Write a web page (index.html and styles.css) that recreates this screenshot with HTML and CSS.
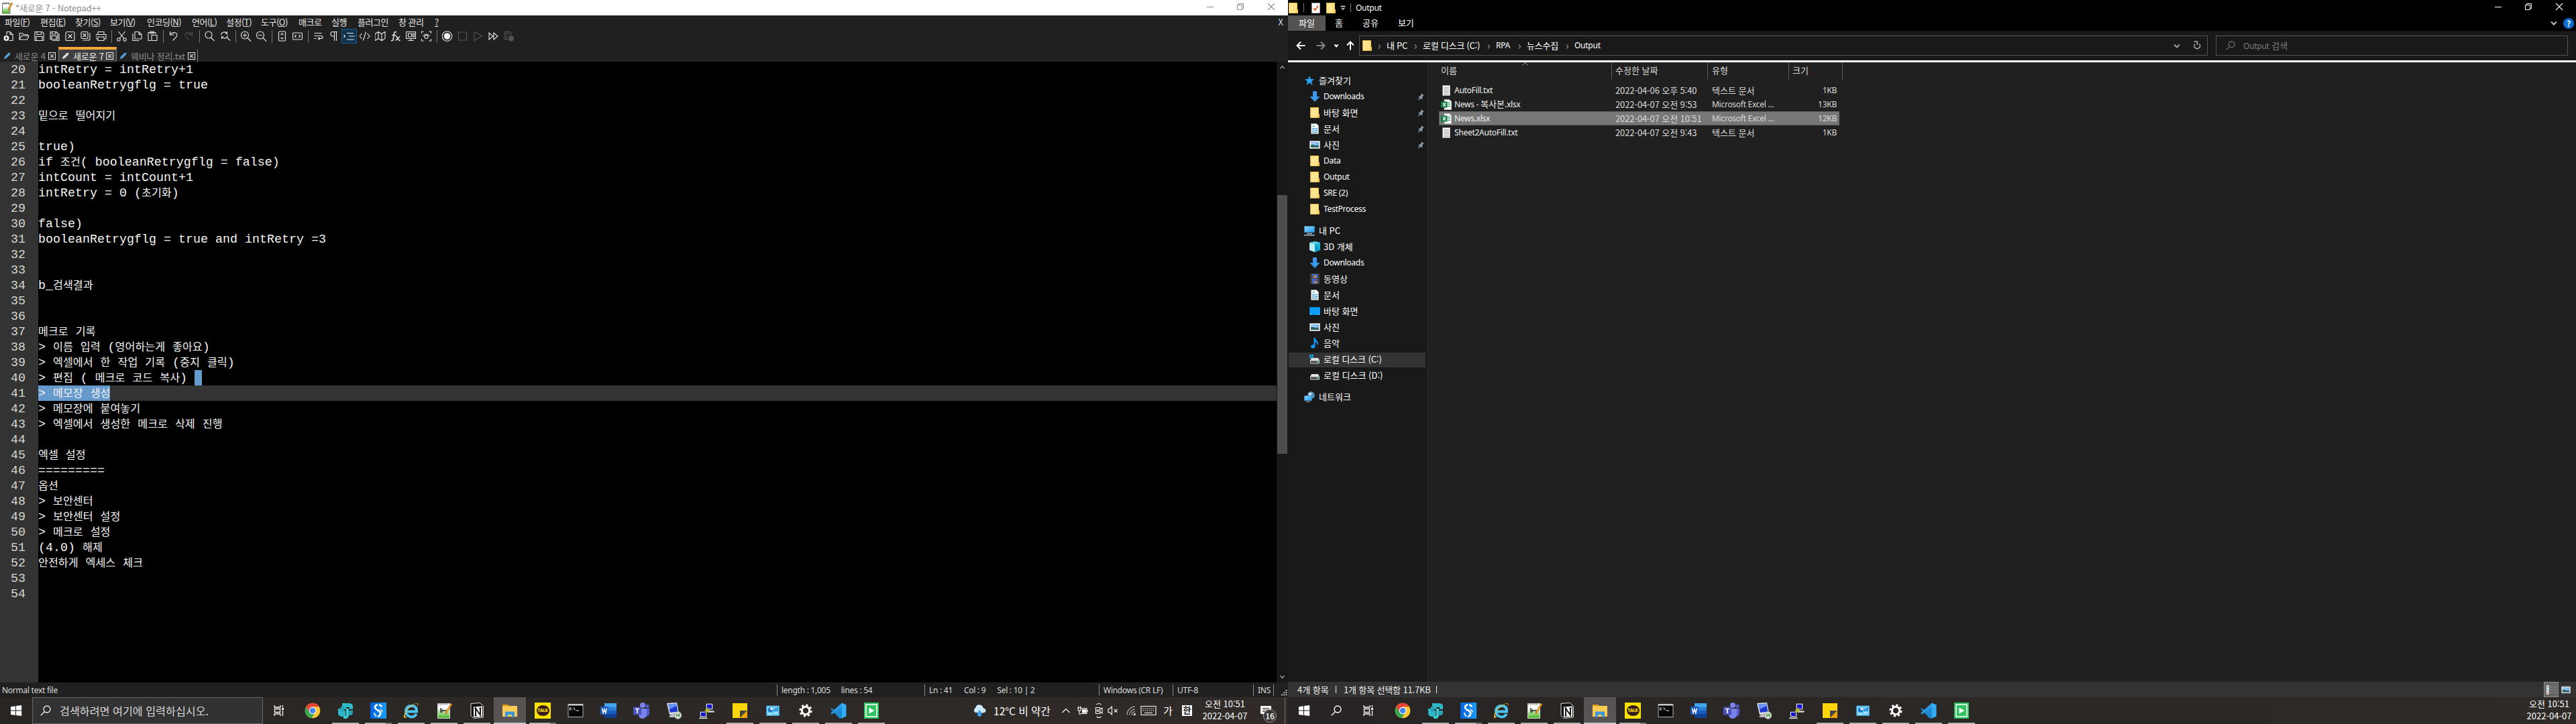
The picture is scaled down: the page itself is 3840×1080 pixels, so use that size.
FILE: index.html
```html
<!DOCTYPE html>
<html lang="ko">
<head>
<meta charset="utf-8">
<title>Desktop</title>
<link rel="stylesheet" href="styles.css">
</head>
<body>
<svg class="defs" width="0" height="0">
  <defs>
    <linearGradient id="g-blue" x1="0" y1="0" x2="1" y2="1"><stop offset="0" stop-color="#8fd8ff"/><stop offset="1" stop-color="#1e9bf0"/></linearGradient>
    <linearGradient id="g-green" x1="0" y1="0" x2="0" y2="1"><stop offset=".3" stop-color="#fff"/><stop offset="1" stop-color="#3fb51c"/></linearGradient>
    <linearGradient id="g-s" x1="0" y1="0" x2="1" y2="0"><stop offset="0" stop-color="#0062e0"/><stop offset="1" stop-color="#1e9cf5"/></linearGradient>
  </defs>
  <symbol id="pencil" viewBox="0 0 12 12"><path d="M1 11l1-3.6L8 1.4Q10-.2 11 1t-.4 3L4.4 10z"/></symbol>
  <symbol id="xbox" viewBox="0 0 12 12"><path d="M.5.5h11v11H.5zM3.2 3.2l5.6 5.6M8.8 3.2L3.2 8.8" fill="none" stroke="currentColor" stroke-width="1.2"/></symbol>
  <symbol id="folder" viewBox="0 0 14 16"><path d="M.5.5h12v9.500h1v5.500H.5z" fill="#ffe48f" stroke="#e8b93a"/><path d="M11.500 10v5" stroke="#e8b93a"/></symbol>
  <symbol id="down" viewBox="0 0 16 16"><path d="M5 0h6v8h4.600L8 16 .4 8H5z" fill="#3a98e8"/></symbol>
  <symbol id="doc" viewBox="0 0 16 16"><path d="M2.500.5h8l3 3v12h-11z" fill="#fff" stroke="#999"/><path d="M4 7.500h8M5 5l1-2 1 2M4 9.500h3M4 11.500h3M4 13.500h8" stroke="#2a93d5" fill="none"/><path d="M8 9h4v3H8z" fill="#7bb3d8"/></symbol>
  <symbol id="pic" viewBox="0 0 16 16"><path d="M.5 2.500h15v11H.5z" fill="#fff" stroke="#aaa"/><path d="M2 4h12v8H2z" fill="#75aff0"/><path d="M2 8q4-1 6 1h6v3H2z" fill="#2f655d"/><path d="M2 6h8v1H2z" fill="#dbeeff"/></symbol>
  <symbol id="star" viewBox="0 0 16 16"><path d="M8 1l2 5 5 .1-3.800 3.400L12.500 15 8 11.500 3.500 15l1.300-5.500L1 6.100 6 6z" fill="#2aa3f0"/></symbol>
  <symbol id="pc" viewBox="0 0 16 16"><path d="M.5 1.500h15v9H.5z" fill="url(#g-blue)" stroke="#3c7fae"/><path d="M4 12.500h8M0 14.800h16" stroke="#a9b9c6" stroke-width="1.400"/></symbol>
  <symbol id="cube" viewBox="0 0 16 16"><path d="M0 2l8-2 8 2v11l-8 3-8-3z" fill="#1cb3d8"/><path d="M0 2l8 2v12l-8-3z" fill="#b9edf3"/><path d="M0 2l8-2 8 2-8 2z" fill="#5fd3dd"/><path d="M8 4l8 9-8 3z" fill="#0a9bcd"/></symbol>
  <symbol id="film" viewBox="0 0 16 16"><path d="M1 0h14v16H1z" fill="#4a4a4a"/><path d="M4 1h8v6H4zM4 8h8v7H4z" fill="#3d69c8"/><path d="M7 3h3v3H7zM7 12h4v2H7z" fill="#dba13a"/><path d="M5 4h2v2H5zM8 9h3v2H8z" fill="#b0344a"/><path d="M2.500 0v16M13.500 0v16" stroke="#111" stroke-dasharray="1 1.500"/></symbol>
  <symbol id="desk" viewBox="0 0 16 16"><path d="M.5 2.500h15v11H.5z" fill="#0e9cff" stroke="#0a83d8"/><path d="M1 12.500h14" stroke="#bfe3ff" stroke-dasharray="2 9 1 1"/></symbol>
  <symbol id="note" viewBox="0 0 16 16"><path d="M6.500 0H8.500Q9 3 12 5.500 14 8.500 11.500 11.500 12.500 7.500 8.500 6v7a3.200 2.800 0 1 1-2-2.600z" fill="#0e9cff"/></symbol>
  <symbol id="disk" viewBox="0 0 16 16"><path d="M3 6h10l2 4H1z" fill="#e2e2e2"/><path d="M1.500 10h13v4h-13z" fill="#444" stroke="#ccc"/><path d="M11 11h2v2h-2z" fill="#44e060"/></symbol>
  <symbol id="diskc" viewBox="0 0 16 16"><use href="#disk"/><path d="M0 1h2.600v2.400H0zM3.400 1H6v2.400H3.400zM0 4.200h2.600v2.400H0zM3.400 4.200H6v2.400H3.400z" fill="#17b4f2"/></symbol>
  <symbol id="net" viewBox="0 0 16 16"><circle cx="10.500" cy="5.500" r="5.400" fill="#5592b8"/><circle cx="9" cy="4" r="2.400" fill="#bfdcec"/><path d="M.5 6.500h11v7H.5z" fill="url(#g-blue)" stroke="#3c7fae"/><path d="M3 15.300h6" stroke="#a9b9c6"/></symbol>
  <symbol id="pin" viewBox="0 0 12 12"><path d="M6 1l5 3-1.500.5L8 8l.5 2.500L5.500 9 1 12l3-4.500L2 6l3-.6 2-3z" fill="#8d99a5"/></symbol>
  <symbol id="txt" viewBox="0 0 14 16"><path d="M1.500.5h11v15h-11z" fill="#fff" stroke="#999"/><path d="M3 3.500h8M3 5.500h8M3 7.500h8M3 9.500h8M3 11.500h8M3 13.500h8" stroke="#a8a8a8"/></symbol>
  <symbol id="xls" viewBox="0 0 16 16"><path d="M5 .5h7.500l3 3v12H5z" fill="#f7f7f7" stroke="#bbb"/><path d="M10 5.500h4M10 8h4M10 10.500h4" stroke="#21a366"/><path d="M0 3.500h9.500v9H0z" fill="#107c41"/><path d="M3 5.500l4 5M7 5.500l-4 5" stroke="#fff" stroke-width="1.300"/></symbol>
  <symbol id="mag" viewBox="0 0 16 16"><circle cx="10" cy="6" r="5" fill="none" stroke="currentColor" stroke-width="1.300"/><path d="M6.500 9.500L.8 15.200" stroke="currentColor" stroke-width="1.300"/></symbol>

  <symbol id="t-win" viewBox="0 0 32 32"><path d="M8 10.300l7-1v6.300H8zM16 9.100l8.200-1.200v7.700H16zM8 16.500h7v6.400l-7-1zM16 16.500h8.200v7.600L16 23z" fill="#fff"/></symbol>
  <symbol id="t-view" viewBox="0 0 32 32"><path d="M9 8v3h9V8M9 24v-3h9v3M9.500 13.500h8v5h-8zM21.500 8v3M21.500 16v8" fill="none" stroke="#fff" stroke-width="1.300"/><path d="M20 12h3v3h-3z" fill="#fff"/></symbol>
  <symbol id="t-chrome" viewBox="0 0 32 32"><circle cx="16" cy="16" r="11.300" fill="#fcc934"/><path d="M6.200 10.300A11.300 11.300 0 0 1 25.800 10.300H16L11 19z" fill="#ea4335"/><path d="M6.200 10.300a11.300 11.300 0 0 0 8.500 16.900l5-8.500h-8.500z" fill="#34a853"/><circle cx="16" cy="16" r="5.400" fill="#fff"/><circle cx="16" cy="16" r="4.300" fill="#4285f4"/></symbol>
  <symbol id="t-knot" viewBox="0 0 32 32"><path d="M11 5h11q5 1 5 4v5h-5v-3h-5v3h-6zM5 13h5v3h6v9h-6q-5-1-5-5z" fill="#2fb8c8"/><path d="M17 13h4v10q0 4-4 5h-4v-4h4z" fill="#39cbd6"/><path d="M9 10h5v8H9zM20 16h7v4l-2 3h-5z" fill="#27a3b4"/></symbol>
  <symbol id="t-s" viewBox="0 0 32 32"><path d="M4 4h24v24H4z" fill="url(#g-s)"/><path d="M15 7q-5 2-4 5 1 2 5 4t3 6q-1 2-4 3M17 7.500q3 0 4 3" fill="none" stroke="#fff" stroke-width="2.600"/><path d="M10 19q0 4 3 5.500M19 14q3 2 3 4.500" fill="none" stroke="#cfe9ff" stroke-width="2"/></symbol>
  <symbol id="t-ie" viewBox="0 0 32 32"><path d="M8.500 17.500h15.500q.6-8.500-7.500-8.500t-8.500 8q.5 8 8.500 8.500 5 0 7-4.500" fill="none" stroke="#4cc3f5" stroke-width="4"/><path d="M6 27Q3 25 9 15 16 6 25 5q3 1 0 6 3-8-5-4Q9 13 7 22q-1 4 3 3-3 2.500-4 2z" fill="#f6c12c"/></symbol>
  <symbol id="t-npp" viewBox="0 0 32 32"><path d="M6.500 5.500h18v22h-18z" fill="url(#g-green)" stroke="#ddd"/><path d="M8 5v3M11 5v3M14 5v3M17 5v3M20 5v3" stroke="#777"/><path d="M11 12v7M13 14v5M14 16h6" stroke="#222" stroke-width="1.400"/><path d="M26 5l2 1.500L20 20l-2 1.500V19z" fill="#f4a62a" stroke="#a35a14" stroke-width=".6"/></symbol>
  <symbol id="t-notion" viewBox="0 0 32 32"><path d="M7 5.500l13-1 5.500 4.500v17l-14 1.500-4.500-4z" fill="#111" stroke="#ddd"/><path d="M11 10.500l13-1v15.500l-13 1z" fill="#fff"/><path d="M14 23V13l7 9.500V12.500M12.500 12.500h3M12.500 23.500h3M19.500 12.500h3" fill="none" stroke="#111" stroke-width="1.900"/></symbol>
  <symbol id="t-exp" viewBox="0 0 32 32"><path d="M5 7h8l2 2h12v16H5z" fill="#fecb55"/><path d="M5 7h8l2 2.500H5z" fill="#e39a16"/><path d="M9 17.500h14V26h-4v-4h-6v4H9z" fill="#3b95dc"/></symbol>
  <symbol id="t-cmd" viewBox="0 0 32 32"><path d="M5 6.500h22v19H5z" fill="#050505" stroke="#b5b5b5"/><path d="M5 6.500h22v2H5z" fill="#d0d0d0"/><path d="M10 12H7.500v3H10M12 12v.8M12 14.500v.8M13.500 11.500l2 4M17 16h4" fill="none" stroke="#fff"/></symbol>
  <symbol id="t-word" viewBox="0 0 32 32"><path d="M10 5h18v6H10z" fill="#41a5ee"/><path d="M10 11h18v5H10z" fill="#2b7cd3"/><path d="M10 16h18v5H10z" fill="#185abd"/><path d="M10 21h18v6H10z" fill="#103f91"/><path d="M4 10h12v12H4z" fill="#185abd"/><path d="M6.500 12.500l1.700 7L10 14l1.800 5.500 1.700-7" fill="none" stroke="#fff" stroke-width="1.500"/></symbol>
  <symbol id="t-teams" viewBox="0 0 32 32"><circle cx="18" cy="8" r="4" fill="#7b83eb"/><circle cx="25" cy="9.500" r="2.700" fill="#5059c9"/><path d="M19 13h9v8q-1 4-6 4z" fill="#5059c9"/><path d="M12 13h12v9q-1 6-7 6-5-1-5-6z" fill="#7b83eb"/><path d="M4 10.500h12v12H4z" fill="#4b53bc"/><path d="M7 13.500h6M10 13.500v6.500" stroke="#fff" stroke-width="1.700"/></symbol>
  <symbol id="t-rdp" viewBox="0 0 32 32"><path d="M5 5l15-1 3 15-14 3z" fill="#e4e6ee"/><path d="M7 6.500l12-1 2.500 12L10 19z" fill="#1b39d0"/><path d="M7 6.500l12-1 .7 3.500L9 14z" fill="#6a92f5"/><path d="M12 21l7-1 1 4q-6 4-12 1z" fill="#bcbfc7"/><circle cx="21.500" cy="23" r="5.400" fill="#dcdfd9" stroke="#969b92"/><path d="M19 21l2 2-2 2M24.500 20.500l-2 2 2 2.500" fill="none" stroke="#33962c" stroke-width="1.400"/></symbol>
  <symbol id="t-putty" viewBox="0 0 32 32"><path d="M14 5h11v10H14zM5 17h11v9H5z" fill="#c9c9c9" stroke="#111"/><path d="M16 7h7v6h-7zM7 19h7v5H7z" fill="#0c0ce0"/><path d="M13 16h14v3H13zM4 26h13v2.500H4z" fill="#ddd" stroke="#222" stroke-width=".7"/><path d="M20 10l-8 6h5l-6 6 10-7h-5z" fill="#ff0" stroke="#333" stroke-width=".4"/></symbol>
  <symbol id="t-sticky" viewBox="0 0 32 32"><path d="M5 5h22v12L17 27H5z" fill="#ffd60a"/><path d="M16 27V16h11z" fill="#444"/><path d="M27 16v11H16z" fill="#f0a500"/></symbol>
  <symbol id="t-panel" viewBox="0 0 32 32"><path d="M6.500 9h19v14.500h-19z" fill="#6fd0fa" stroke="#4193c4"/><circle cx="12.500" cy="15" r="3.600" fill="#1b78c8"/><path d="M12.500 15v-3.600a3.600 3.600 0 0 1 3.600 3.600z" fill="#fff"/><path d="M18 17v-3M20.500 17v-5M23 17v-6" stroke="#1b78c8" stroke-width="1.500"/><path d="M9 21h6M18 19.500h5" stroke="#fff"/></symbol>
  <symbol id="t-gear" viewBox="0 0 32 32"><circle cx="16" cy="16" r="5.700" fill="none" stroke="#fff" stroke-width="3"/><circle cx="16" cy="16" r="8.200" fill="none" stroke="#fff" stroke-width="2.800" stroke-dasharray="3.220 3.220"/></symbol>
  <symbol id="t-code" viewBox="0 0 32 32"><path d="M21 4.500L9.500 15 6 12.200l-2 1.200 13.500 14L21 27.500z" fill="#1b8ad2"/><path d="M4 20l2 1.500L21 10.500V4.500z" fill="#2a9be4"/><path d="M21 4.500l6.500 3v17L21 27.500z" fill="#33aef2"/></symbol>
  <symbol id="t-play" viewBox="0 0 32 32"><path d="M5 4h22v24H5z" fill="#2fc460"/><path d="M8 7h16v18H8z" fill="none" stroke="#fff" stroke-width="1.600"/><path d="M12.500 11.500l8 4.500-8 4.500z" fill="#fff"/></symbol>

  <symbol id="restore" viewBox="0 0 12 12"><path d="M1.500 3.500h7v7h-7zM3.500 3.500v-2h7v7h-2" fill="none" stroke="currentColor"/></symbol>
  <symbol id="close" viewBox="0 0 12 12"><path d="M1 1l10 10M11 1L1 11" stroke="currentColor" stroke-width="1.100"/></symbol>
</svg>

<div class="desktop">
<section class="monitor">
  <div class="npp">
    <header class="npp-title">
      <svg class="npp-logo" viewBox="0 0 18 18"><path d="M2.500 2h11.500v15H2.500z" fill="url(#g-green)" stroke="#777"/><path d="M4 .5v3M6.500.5v3M9 .5v3M11.500.5v3" stroke="#555"/><path d="M16 1l2 1-5 9-2 1.500V10z" fill="#f4a62a" stroke="#8a4a10" stroke-width=".5"/></svg>
      <span class="npp-name">*새로운 7 - Notepad++</span>
      <div class="win-ctl gray"><i class="min"></i><svg><use href="#restore"/></svg><svg><use href="#close"/></svg></div>
    </header>
    <nav class="menu">
      <span>파일(<u>F</u>)</span><span>편집(<u>E</u>)</span><span>찾기(<u>S</u>)</span><span>보기(<u>V</u>)</span><span>인코딩(<u>N</u>)</span><span>언어(<u>L</u>)</span><span>설정(<u>T</u>)</span><span>도구(<u>O</u>)</span><span>매크로</span><span>실행</span><span>플러그인</span><span>창 관리</span><span><u>?</u></span>
      <b class="menu-x">X</b>
    </nav>
    <div class="tools">
      <svg viewBox="0 0 16 16"><path d="M5.500 6V1.500h5l4 4v9H9M10.500 1.500v4h4"/><circle cx="5" cy="11" r="4" fill="#eee" stroke="none"/><path d="M5 9v4M3 11h4" stroke="#222"/></svg>
      <svg viewBox="0 0 16 16"><path d="M1.500 13V3.500h4.500l1.500 2h6v2M1.500 13l3-5.500h11l-2.500 5.500z"/></svg>
      <svg viewBox="0 0 16 16"><path d="M1.500 1.500h11l2 2v11h-13zM4.500 1.500v4h6.500v-4M3.500 14.500v-6h9v6"/></svg>
      <svg viewBox="0 0 16 16"><path d="M1.500 1.500h9l2 2v9h-11zM4 1.500v3.500h5.500V1.500M3.500 12.500v-5h7v5M14.500 4v10.500H4"/></svg>
      <svg viewBox="0 0 16 16"><rect x="1.500" y="1.500" width="13" height="13" rx="2"/><path d="M5 5l6 6M11 5l-6 6"/></svg>
      <svg viewBox="0 0 16 16"><rect x="1.500" y="1.500" width="10" height="10" rx="1.500"/><path d="M4 4l5 5M9 4L4 9M14.500 3v9q0 2-2 2H4"/></svg>
      <svg viewBox="0 0 16 16"><path d="M3.500 5V1.500h9V5M3.500 12H.5V5.500h15V12h-3M3.500 9h9v5.500h-9z"/></svg>
      <i></i>
      <svg viewBox="0 0 16 16"><path d="M3 1l8.500 10.500M13 1L4.500 11.500"/><circle cx="3.500" cy="13" r="2.200"/><circle cx="12.500" cy="13" r="2.200"/></svg>
      <svg viewBox="0 0 16 16"><path d="M4.500 1.500h6l4 4V12h-10zM10.500 1.500v4h4M1.500 4v10.500H11"/></svg>
      <svg viewBox="0 0 16 16"><path d="M5.500 14.500h-4v-12h11V5M4.500 1h5v3h-5zM6.500 6.500h8v8h-8z"/></svg>
      <i></i>
      <svg viewBox="0 0 16 16"><path d="M3 1v5h6M3 5.500Q7 1.500 11 3t1.500 6L7 14.500"/></svg>
      <svg class="dim" viewBox="0 0 16 16"><path d="M13 1v5H7M13 5.500Q9 1.500 5 3t-1.500 6L8 13.500"/></svg>
      <i></i>
      <svg viewBox="0 0 16 16"><circle cx="6.500" cy="6" r="5"/><path d="M10 10l5 5"/></svg>
      <svg viewBox="0 0 16 16"><path d="M2 6a5 5 0 0 1 9-2V1M11 4H8M12 6.500a5 5 0 0 1-9 2.500V12M3 9h3M11 10l4.500 4.500"/></svg>
      <i></i>
      <svg viewBox="0 0 16 16"><circle cx="6.500" cy="6.500" r="5.500"/><path d="M10.500 10.500l5 5M3.500 6.500h6M6.500 3.500v6"/></svg>
      <svg viewBox="0 0 16 16"><circle cx="6.500" cy="6.500" r="5.500"/><path d="M10.500 10.500l5 5M3.500 6.500h6"/></svg>
      <i></i>
      <svg viewBox="0 0 16 16"><rect x="3" y="1" width="10" height="14" rx="1.500"/><path d="M6 6l2-2 2 2M6 10l2 2 2-2"/></svg>
      <svg viewBox="0 0 16 16"><rect x="1" y="3" width="14" height="10" rx="1.500"/><path d="M6 6L4 8l2 2M10 6l2 2-2 2"/></svg>
      <i></i>
      <svg viewBox="0 0 16 16"><path d="M2 3.500h11M2 7.500h10.500q2 0 2 2t-2 2H8M2 11.500h3M10 9.500l-2 2 2 2"/></svg>
      <svg viewBox="0 0 16 16"><path d="M13.500 1.500H6.500a3 3.200 0 0 0 0 6.500H9M9 1.500V15M12 1.500V15"/></svg>
      <svg class="on" viewBox="0 0 23 22"><path d="M8 6.500h10M11 11h9M8 16h11M3.500 9l2 2-2 2"/></svg>
      <svg viewBox="0 0 16 16"><path d="M4 4L.5 8 4 12M12 4l3.500 4L12 12M10 1.500L6 14.500"/></svg>
      <svg viewBox="0 0 16 16"><path d="M.5 4.500l5-3 5 3 5-3v10l-5 3-5-3-5 3zM5.500 1.500v10M10.500 4.500v10"/></svg>
      <svg viewBox="0 0 16 16"><path d="M9.500 2Q6.500.5 6 4L4.500 13Q4 15.500 1.500 14.500M3 6.500h6M8.500 8.500q2-.5 3 3t3.500 2.500M14.500 8.500l-6.500 6" stroke-width="1.500"/></svg>
      <svg viewBox="0 0 16 16"><path d="M1 1.500h14v10H1zM8 11.500v3M4 14.500h8M4 4h5v5H4zM11 4h2v5h-2z"/></svg>
      <svg viewBox="0 0 16 16"><path d="M1 4V1h3M12 1h3v3M15 12v3h-3M4 15H1v-3M3 8q5-6 10 0"/><circle cx="8" cy="9" r="2.500"/></svg>
      <i></i>
      <svg viewBox="0 0 16 16"><circle cx="8" cy="8" r="7.300"/><circle cx="8" cy="8" r="4.300" fill="#f2f2f2"/></svg>
      <svg class="dim" viewBox="0 0 16 16"><path d="M2 2h12v12H2z"/></svg>
      <svg class="dim" viewBox="0 0 16 16"><path d="M2.500 1.500L14 8 2.500 14.500z"/></svg>
      <svg viewBox="0 0 16 16"><path d="M1.500 3L7.500 8l-6 5zM8.500 3l6 5-6 5z"/></svg>
      <svg class="dim" viewBox="0 0 16 16"><path d="M1.500 1.500h8l2 2V7M4 1.500V5h4V1.500M1.500 1.500v11H7M4 12V8h3"/><circle cx="11.500" cy="11.500" r="3.500" fill="#555"/></svg>
    </div>
    <div class="tabs">
      <div class="tab t1"><svg class="pen"><use href="#pencil"/></svg><span>새로운 4</span><svg class="x"><use href="#xbox"/></svg></div>
      <div class="tab t2 active"><svg class="pen"><use href="#pencil"/></svg><span>새로운 7</span><svg class="x"><use href="#xbox"/></svg></div>
      <div class="tab t3"><svg class="pen"><use href="#pencil"/></svg><span>웨비나 정리.txt</span><svg class="x"><use href="#xbox"/></svg></div>
    </div>
    <div class="editor">
      <div class="gutter"><p>20</p><p>21</p><p>22</p><p>23</p><p>24</p><p>25</p><p>26</p><p>27</p><p>28</p><p>29</p><p>30</p><p>31</p><p>32</p><p>33</p><p>34</p><p>35</p><p>36</p><p>37</p><p>38</p><p>39</p><p>40</p><p>41</p><p>42</p><p>43</p><p>44</p><p>45</p><p>46</p><p>47</p><p>48</p><p>49</p><p>50</p><p>51</p><p>52</p><p>53</p><p>54</p></div>
      <div class="code">
        <p>intRetry = intRetry+1</p>
        <p>booleanRetrygflg = true</p>
        <p></p>
        <p><b>밑으로</b> <b>떨어지기</b></p>
        <p></p>
        <p>true)</p>
        <p>if <b>조건</b>( booleanRetrygflg = false)</p>
        <p>intCount = intCount+1</p>
        <p>intRetry = 0 (<b>초기화</b>)</p>
        <p></p>
        <p>false)</p>
        <p>booleanRetrygflg = true and intRetry =3</p>
        <p></p>
        <p></p>
        <p>b_<b>검색결과</b></p>
        <p></p>
        <p></p>
        <p><b>메크로</b> <b>기록</b></p>
        <p>&gt; <b>이름</b> <b>입력</b> (<b>영어하는게</b> <b>좋아요</b>)</p>
        <p>&gt; <b>엑셀에서</b> <b>한</b> <b>작업</b> <b>기록</b> (<b>중지</b> <b>클릭</b>)</p>
        <p>&gt; <b>편집</b> ( <b>메크로</b> <b>코드</b> <b>복사</b>) <span class="sel"> </span></p>
        <p class="cur"><span class="sel">&gt; <b>메모장</b> <b>생성</b></span></p>
        <p>&gt; <b>메모장에</b> <b>붙여놓기</b></p>
        <p>&gt; <b>엑셀에서</b> <b>생성한</b> <b>메크로</b> <b>삭제</b> <b>진행</b></p>
        <p></p>
        <p><b>엑셀</b> <b>설정</b></p>
        <p>=========</p>
        <p><b>옵션</b></p>
        <p>&gt; <b>보안센터</b></p>
        <p>&gt; <b>보안센터</b> <b>설정</b></p>
        <p>&gt; <b>메크로</b> <b>설정</b></p>
        <p>(4.0) <b>해제</b></p>
        <p><b>안전하게</b> <b>엑세스</b> <b>체크</b></p>
        <p></p>
        <p></p>
      </div>
      <div class="scroll">
        <svg viewBox="0 0 17 18"><path d="M5 11l3.500-4 3.500 4" /></svg>
        <div class="thumb"></div>
        <svg viewBox="0 0 17 18"><path d="M5 7l3.500 4L12 7" /></svg>
      </div>
    </div>
    <footer class="npp-status lat">
      <span class="s0">Normal text file</span>
      <span class="s1"><em>length : 1,005</em><em>lines : 54</em></span>
      <span class="s2"><em>Ln : 41</em><em>Col : 9</em><em>Sel : 10 | 2</em></span>
      <span class="s3">Windows (CR LF)</span>
      <span class="s4">UTF-8</span>
      <span class="s5">INS</span>
      <span class="s6"><svg viewBox="0 0 9 9"><path d="M6.500 0h2v2h-2zM3.300 3.300h2v2h-2zM6.500 3.300h2v2h-2zM0 6.600h2v2H0zM3.300 6.600h2v2h-2zM6.500 6.600h2v2h-2z" fill="#bbb"/></svg></span>
    </footer>
  </div>
  <div class="taskbar">
    <div class="sys start"><svg><use href="#t-win"/></svg></div>
    <div class="searchbox"><svg><use href="#mag"/></svg><span>검색하려면 여기에 입력하십시오.</span></div>
    <div class="sys view"><svg><use href="#t-view"/></svg></div>
    <div class="apps">
      <div><svg><use href="#t-chrome"/></svg></div>
      <div class="run"><svg><use href="#t-knot"/></svg></div>
      <div class="run multi"><svg><use href="#t-s"/></svg></div>
      <div class="run"><svg><use href="#t-ie"/></svg></div>
      <div class="run"><svg><use href="#t-npp"/></svg></div>
      <div class="run"><svg><use href="#t-notion"/></svg></div>
      <div class="run focus"><svg><use href="#t-exp"/></svg></div>
      <div class="run multi"><span class="talk"><span>TALK</span></span></div>
      <div><svg><use href="#t-cmd"/></svg></div>
      <div><svg><use href="#t-word"/></svg></div>
      <div><svg><use href="#t-teams"/></svg></div>
      <div><svg><use href="#t-rdp"/></svg></div>
      <div><svg><use href="#t-putty"/></svg></div>
      <div class="run"><svg><use href="#t-sticky"/></svg></div>
      <div class="run"><svg><use href="#t-panel"/></svg></div>
      <div class="run"><svg><use href="#t-gear"/></svg></div>
      <div class="run"><svg><use href="#t-code"/></svg></div>
      <div class="run"><svg><use href="#t-play"/></svg></div>
    </div>
    <div class="tray">
      <svg class="cloud" viewBox="0 0 20 20"><path d="M4 13a4 4 0 0 1 0-7Q6 0 11 1.500 15 2 15.500 6q4 1 4 4t-4 3.500z" fill="#cfe8fb"/><path d="M10 9q5 5 2.500 9-2.500 2-5 0Q5.500 14 10 9z" fill="#3ea0ea"/></svg>
      <span class="weather">12°C 비 약간</span>
      <svg class="up" viewBox="0 0 14 16"><path d="M1.500 11L7 5.500l5.500 5.500"/></svg>
      <svg class="bat" viewBox="0 0 16 16"><path d="M5.500 4.500h9v8h-8M15.500 7v3M1 4h5M1.500 4v4h4V4M3.500 8v5h3M2 1.500v2M5 1.500v2"/><path d="M8 6.500h5v4.500H8z" fill="#fff"/></svg>
      <svg class="cam" viewBox="0 0 12 24"><path d="M1.500 7.500h6v9h-6zM8 10l3-2v8l-3-2M2.500 3Q6 0 9.500 3M2.500 21Q6 24 9.500 21"/><circle cx="4.500" cy="12" r="1.300"/></svg>
      <svg class="spk" viewBox="0 0 16 16"><path d="M1 5.500h2L6.500 2v12L3 10.500H1zM10 6l4.500 4.500M14.500 6L10 10.500"/></svg>
      <svg class="wifi" viewBox="0 0 14 16"><path d="M1 14.500A12.500 12.500 0 0 1 13 2M4.500 14.500A9 9 0 0 1 13 6M8 14.500A5.500 5.500 0 0 1 13 9.500" opacity=".7"/><path d="M13 12.500v2h-2z" fill="#fff"/></svg>
      <svg class="kbd" viewBox="0 0 24 16"><path d="M1 1.500h22v13H1z"/><path d="M3.500 5h17M3.500 8h17" stroke-dasharray="1.500 1.500"/><path d="M6 11.500h12"/></svg>
      <span class="ga">가</span>
      <span class="han">한</span>
      <div class="clock"><span>오전 10:51</span><span>2022-04-07</span></div>
      <div class="noti"><svg viewBox="0 0 18 18"><path d="M1 1h16v12H8l-3 3.500V13H1z" fill="#fff"/><path d="M4 4.500h10M4 7h10M4 9.500h7" stroke="#2e2926"/></svg><b>16</b></div>
      <i class="peek"></i>
    </div>
  </div>
</section>

<section class="monitor">
  <div class="explorer">
    <header class="ex-title">
      <svg class="fo"><use href="#folder"/></svg><i class="bar"></i>
      <svg class="chk" viewBox="0 0 13 16"><path d="M.5.5h12v15H.5z" fill="#fff" stroke="#999"/><path d="M3 8l2.500 3L10 4.500" fill="none" stroke="#e2561a" stroke-width="1.700"/></svg>
      <svg class="fo"><use href="#folder"/></svg>
      <svg class="dd" viewBox="0 0 8 8"><path d="M.5 1.500h7M2 4l2 2 2-2" fill="none" stroke="#eee" stroke-width="1.300"/></svg><i class="bar"></i>
      <span class="lat">Output</span>
      <div class="win-ctl white"><i class="min"></i><svg><use href="#restore"/></svg><svg><use href="#close"/></svg></div>
    </header>
    <div class="ribbon"><span class="file">파일</span><span>홈</span><span>공유</span><span>보기</span>
      <div class="rib-right"><svg viewBox="0 0 10 8"><path d="M1 1.500l4 4 4-4" fill="none" stroke="#bbb" stroke-width="2"/></svg><b>?</b></div>
    </div>
    <div class="navrow">
      <svg class="back" viewBox="0 0 14 14"><path d="M13.500 7H1.500M7 1.500L1.500 7 7 12.500"/></svg>
      <svg class="fwd" viewBox="0 0 14 14"><path d="M.5 7h12M7 1.500L12.500 7 7 12.500"/></svg>
      <svg class="rec" viewBox="0 0 8 8"><path d="M1.500 2.500L4 5.500l2.500-3"/></svg>
      <svg class="upa" viewBox="0 0 12 14"><path d="M6 13.500V1.500M1 6.500l5-5 5 5"/></svg>
      <div class="addr">
        <svg class="fo"><use href="#folder"/></svg>
        <i>›</i><span class="c1">내 PC</span><i>›</i><span class="c2">로컬 디스크 (C:)</span><i>›</i><span class="c3 lat">RPA</span><i>›</i><span class="c4">뉴스수집</span><i>›</i><span class="c5 lat">Output</span>
        <svg class="adrop" viewBox="0 0 10 8"><path d="M1 1.500l4 4 4-4" fill="none" stroke="#999" stroke-width="2"/></svg>
        <svg class="refresh" viewBox="0 0 12 14"><path d="M9.500 4.500a4.300 4.300 0 1 1-6.500 0M1.500 1h5v5" fill="none" stroke="#aaa" stroke-width="1.600"/></svg>
      </div>
      <div class="exsearch"><svg><use href="#mag"/></svg><span><span class="lat">Output</span> 검색</span></div>
    </div>
    <div class="ex-body">
      <aside>
        <div class="r l1"><svg><use href="#star"/></svg>즐겨찾기</div>
        <div class="r lat"><svg><use href="#down"/></svg><span>Downloads</span><svg class="pin"><use href="#pin"/></svg></div>
        <div class="r"><svg><use href="#folder"/></svg><span>바탕 화면</span><svg class="pin"><use href="#pin"/></svg></div>
        <div class="r"><svg><use href="#doc"/></svg><span>문서</span><svg class="pin"><use href="#pin"/></svg></div>
        <div class="r"><svg><use href="#pic"/></svg><span>사진</span><svg class="pin"><use href="#pin"/></svg></div>
        <div class="r lat"><svg><use href="#folder"/></svg>Data</div>
        <div class="r lat"><svg><use href="#folder"/></svg>Output</div>
        <div class="r lat"><svg><use href="#folder"/></svg>SRE (2)</div>
        <div class="r lat"><svg><use href="#folder"/></svg>TestProcess</div>
        <div class="r l1 gap"><svg><use href="#pc"/></svg>내 PC</div>
        <div class="r"><svg><use href="#cube"/></svg>3D 개체</div>
        <div class="r lat"><svg><use href="#down"/></svg>Downloads</div>
        <div class="r"><svg><use href="#film"/></svg>동영상</div>
        <div class="r"><svg><use href="#doc"/></svg>문서</div>
        <div class="r"><svg><use href="#desk"/></svg>바탕 화면</div>
        <div class="r"><svg><use href="#pic"/></svg>사진</div>
        <div class="r"><svg><use href="#note"/></svg>음악</div>
        <div class="r hl"><svg><use href="#diskc"/></svg>로컬 디스크 (C:)</div>
        <div class="r"><svg><use href="#disk"/></svg>로컬 디스크 (D:)</div>
        <div class="r l1 gap"><svg><use href="#net"/></svg>네트워크</div>
      </aside>
      <main>
        <div class="head"><span class="n">이름<svg viewBox="0 0 9 5"><path d="M.5 4.500l4-4 4 4" fill="none" stroke="#aaa"/></svg></span><span class="d">수정한 날짜</span><span class="t">유형</span><span class="s">크기</span></div>
        <div class="file-row"><svg><use href="#txt"/></svg><span class="n lat">AutoFill.txt</span><span class="d">2022-04-06 오후 5:40</span><span class="t">텍스트 문서</span><span class="s lat">1KB</span></div>
        <div class="file-row"><svg><use href="#xls"/></svg><span class="n lat">News - <em class="ko">복사본</em>.xlsx</span><span class="d">2022-04-07 오전 9:53</span><span class="t lat">Microsoft Excel ...</span><span class="s lat">13KB</span></div>
        <div class="file-row picked"><svg><use href="#xls"/></svg><span class="n lat">News.xlsx</span><span class="d">2022-04-07 오전 10:51</span><span class="t lat">Microsoft Excel ...</span><span class="s lat">12KB</span></div>
        <div class="file-row"><svg><use href="#txt"/></svg><span class="n lat">Sheet2AutoFill.txt</span><span class="d">2022-04-07 오전 9:43</span><span class="t">텍스트 문서</span><span class="s lat">1KB</span></div>
      </main>
    </div>
    <footer class="ex-status"><span class="e1">4개 항목</span><span class="e2">1개 항목 선택함 11.7KB</span>
      <div class="modes"><span class="mode on"><svg viewBox="0 0 18 14"><path d="M1 0h4v14H1z" fill="#eee"/><path d="M2.200 2h1.600v1.600H2.200z" fill="#286"/><path d="M2.200 6.200h1.600v1.600H2.200z" fill="#28e"/><path d="M2.200 10.400h1.600V12H2.200z" fill="#d33"/><path d="M7 2.500h4M13 2.500h4M7 6.800h4M13 6.800h4M7 11.200h4M13 11.200h4" stroke="#999"/></svg></span><svg class="pic"><use href="#pic"/></svg></div>
    </footer>
  </div>
  <div class="taskbar second">
    <div class="sys start"><svg><use href="#t-win"/></svg></div>
    <div class="sys find"><svg><use href="#mag"/></svg></div>
    <div class="sys view"><svg><use href="#t-view"/></svg></div>
    <div class="apps">
      <div><svg><use href="#t-chrome"/></svg></div>
      <div class="run"><svg><use href="#t-knot"/></svg></div>
      <div class="run multi"><svg><use href="#t-s"/></svg></div>
      <div class="run"><svg><use href="#t-ie"/></svg></div>
      <div class="run"><svg><use href="#t-npp"/></svg></div>
      <div class="run"><svg><use href="#t-notion"/></svg></div>
      <div class="run focus"><svg><use href="#t-exp"/></svg></div>
      <div class="run multi"><span class="talk"><span>TALK</span></span></div>
      <div><svg><use href="#t-cmd"/></svg></div>
      <div><svg><use href="#t-word"/></svg></div>
      <div><svg><use href="#t-teams"/></svg></div>
      <div><svg><use href="#t-rdp"/></svg></div>
      <div><svg><use href="#t-putty"/></svg></div>
      <div class="run"><svg><use href="#t-sticky"/></svg></div>
      <div class="run"><svg><use href="#t-panel"/></svg></div>
      <div class="run"><svg><use href="#t-gear"/></svg></div>
      <div class="run"><svg><use href="#t-code"/></svg></div>
      <div class="run"><svg><use href="#t-play"/></svg></div>
    </div>
    <div class="tray"><div class="clock"><span>오전 10:51</span><span>2022-04-07</span></div></div>
  </div>
</section>
</div>
</body>
</html>
```
FILE: styles.css
```css
* { box-sizing: border-box; }
body { margin: 0; background: #000; color: #fff; font: 13px/16px "Noto Sans CJK KR", "Noto Sans", sans-serif; letter-spacing: 0; overflow: hidden; }
.defs { position: absolute; }
p { margin: 0; }
i, em { font-style: normal; }
span { white-space: nowrap; }
svg { display: block; flex: none; }
.lat { font-family: "Noto Sans", "Noto Sans CJK KR", sans-serif; font-size: 12px; letter-spacing: -0.27px; }
.ko { font-size: 13px; letter-spacing: 0; }
.desktop { display: flex; width: 3840px; height: 1080px; }
.monitor { width: 1920px; height: 1080px; display: flex; flex-direction: column; }
.npp, .explorer { height: 1040px; display: flex; flex-direction: column; background: #202020; }

/* window buttons */
.win-ctl { margin-left: auto; display: flex; align-items: center; gap: 34px; height: 20px; align-self: flex-start; }
.win-ctl svg { width: 12px; height: 12px; }
.win-ctl .min { width: 10px; height: 1px; background: currentColor; }
.win-ctl.gray { color: #8a8a8a; margin-right: 19px; }
.win-ctl.white { color: #fff; margin-right: 19px; }

/* editor window */
.npp-title { height: 23px; background: #fff; display: flex; align-items: center; color: #8f8f8f; }
.npp-logo { width: 18px; height: 18px; margin-left: 1px; }
.npp-name { margin-left: 4px; letter-spacing: -0.2px; }
.menu { height: 20px; display: flex; align-items: center; padding: 0 7px; color: #e6e6e6; }
.menu span { width: 52px; letter-spacing: -0.5px; }
.menu span:nth-child(1) { width: 53px; }
.menu span:nth-child(4) { width: 55px; }
.menu span:nth-child(5) { width: 67px; }
.menu span:nth-child(6) { width: 51px; }
.menu span:nth-child(8) { width: 56px; }
.menu span:nth-child(9) { width: 49px; }
.menu span:nth-child(10) { width: 39px; }
.menu span:nth-child(11) { width: 61px; }
.menu span:nth-child(12) { width: 54px; }
.menu u { text-underline-offset: 1px; }
.menu-x { margin-left: auto; font-weight: 400; color: #c9d8e8; }
.tools { height: 27px; display: flex; padding-left: 1px; align-items: flex-start; }
.tools svg { width: 23px; height: 22px; padding: 3px 3.500px; fill: none; stroke: #e8e8e8; stroke-width: 1.1; }
.tools svg.dim { stroke: #555; }
.tools svg.on { padding: 0; background: #12314c; outline: 1px solid #1c5c90; outline-offset: -1px; }
.tools i { width: 8px; height: 19px; margin-top: 2px; background: linear-gradient(#777, #777) 4px 0 / 1px 100% no-repeat; }
.tabs { height: 22px; display: flex; color: #8c8c8c; }
.tab { display: flex; align-items: center; padding-top: 5px; border-right: 1px solid #202020; }
.tab .pen { width: 11px; height: 11px; fill: #5a9fd6; }
.tab .x { width: 11px; height: 11px; color: #e8e8e8; margin-left: auto; }
.t1 { width: 87px; padding-left: 5px; padding-right: 3px; }
.tab span { margin-left: 6px; letter-spacing: -0.2px; }
.t2 { width: 87px; padding-left: 5px; padding-right: 4px; }
.t3 { width: 121px; padding-left: 4px; padding-right: 4px; background: linear-gradient(#888, #888) right 4px / 1px 18px no-repeat; border: 0; }
.tab.active { background: #404040; color: #f0f0f0; border: 0; border-top: 4px solid #ffa83a; border-right: 1px solid #777; border-left: 1px solid #777; padding-top: 1px; padding-left: 4px; }
.tab.active .pen { fill: #e0e0e0; }
.editor { flex: 1; display: flex; background: #000; min-height: 0; font: 18.330px/25px "Liberation Mono", monospace; }
.editor p { height: 23px; white-space: pre; line-height: 25px; }
.gutter { width: 57px; background: #333; color: #d6d6d0; padding-left: 16px; }
.code { flex: 1; color: #f4f4f4; }
.code b { font: 400 16.200px/0 "Noto Sans CJK KR", sans-serif; }
.code .cur { background: #333; }
.sel { background: #6699cc; display: inline-block; height: 23px; white-space: pre; vertical-align: top; }
.scroll { width: 17px; background: #171717; display: flex; flex-direction: column; padding: 0 1px; }
.scroll svg { width: 15px; height: 17px; fill: none; stroke: #888; stroke-width: 2; }
.scroll .thumb { margin-top: 182px; margin-bottom: auto; height: 386px; background: #4d4d4d; }
.npp-status { height: 22px; display: flex; align-items: center; color: #dcdcdc; padding-top: 1px; }
.npp-status > span { display: flex; height: 17px; align-items: center; border-left: 1px solid #8a8a8a; padding-left: 6px; }
.npp-status .s0 { width: 1158px; border: 0; padding-left: 3px; }
.s1 { width: 220px; gap: 16px; }
.s2 { width: 260px; gap: 17px; }
.s3 { width: 110px; }
.s4 { width: 120px; }
.s5 { width: 30px; }
.npp-status .s6 { width: 22px; padding-left: 11px; padding-top: 8px; }
.s6 svg { width: 9px; height: 9px; }

/* taskbar */
.taskbar { height: 40px; display: flex; background: linear-gradient(90deg, #282523, #2c2826 40%, #302b28); color: #fff; }
.taskbar.second { background: linear-gradient(90deg, #272423, #2c2826 60%, #2e2a27); }
.sys { width: 48px; display: flex; align-items: center; justify-content: center; }
.sys svg { width: 32px; height: 32px; }
.find svg { width: 16px; height: 16px; }
.searchbox { width: 344px; background: #323232; border: 1px solid #686868; display: flex; align-items: center; padding-left: 11px; color: #d8d8d8; font-size: 16.200px; }
.searchbox svg { width: 16px; height: 16px; margin-right: 13px; color: #eee; }
.apps { display: flex; gap: 1px; margin-left: 2px; }
.second .apps { margin-left: 3px; }
.apps > div { width: 48px; height: 40px; display: flex; align-items: center; justify-content: center; background: linear-gradient(#b5b2b0, #b5b2b0) 4px 38px / 0 2px no-repeat; }
.apps > .run { background-size: 40px 2px; }
.apps > .multi { background: linear-gradient(90deg, #b5b2b0 31px, #777 31px) 4px 38px / 40px 2px no-repeat; }
.apps > .focus { background: linear-gradient(#c6c4c3, #c6c4c3) 0 38px / 48px 2px no-repeat #575453; }
.apps svg { width: 32px; height: 32px; }
.talk { width: 24px; height: 24px; background: #fae100; display: flex; align-items: center; justify-content: center; }
.talk span { width: 19px; height: 16px; border-radius: 50%; background: #371d1e; color: #fae100; font: 800 6px/16px "Open Sans", sans-serif; letter-spacing: -0.1px; text-align: center; }
.tray { margin-left: auto; display: flex; align-items: center; }
.tray > svg { fill: none; stroke: #fff; stroke-width: 1.1; height: 16px; }
.tray .cloud { width: 20px; height: 20px; stroke: none; margin-right: 11px; }
.weather { width: 84px; font-size: 15.600px; }
.up { width: 14px; margin-left: 17px; }
.bat { width: 17px; margin-left: 9px; }
.tray > .cam { width: 12px; height: 24px; margin-left: 10px; }
.spk { width: 16px; margin-left: 7px; }
.wifi { width: 14px; margin-left: 12px; }
.kbd { width: 24px; margin-left: 7px; }
.ga { width: 14px; margin-left: 10px; font-size: 15px; }
.han { width: 15px; height: 16px; margin-left: 14px; background: #fff; color: #111; font-size: 13px; line-height: 14px; font-weight: 700; text-align: center; }
.clock { width: 68px; margin-left: 15px; display: flex; flex-direction: column; align-items: center; line-height: 18px; height: 38px; }
.clock span { height: 18px; }
.noti { width: 28px; height: 40px; margin-left: 18px; position: relative; }
.noti svg { width: 18px; height: 18px; margin-top: 12px; }
.noti b { position: absolute; left: 5px; top: 18px; width: 20px; height: 20px; border: 1px solid #999; border-radius: 50%; background: #3b3634; text-align: center; font-size: 12px; line-height: 17px; font-weight: 500; }
.peek { width: 1px; height: 40px; background: #777; margin-left: 9px; margin-right: 4px; }
.second .clock { margin-right: 6px; }

/* file manager */
.fo { width: 14px; height: 16px; }
.ex-title { height: 23px; background: #000; display: flex; align-items: center; padding-left: 1px; }
.ex-title .bar { width: 1px; height: 13px; background: #777; margin: 0 11px 0 8px; }
.ex-title .chk { width: 13px; height: 16px; margin-right: 9px; }
.ex-title .dd { width: 8px; height: 8px; margin-left: 7px; }
.ex-title .dd + .bar { margin-right: 7px; margin-left: 7px; }
.ribbon { height: 24px; background: #000; display: flex; border-bottom: 1px solid #111; }
.ribbon span { line-height: 21px; margin-right: 29px; }
.ribbon .file { width: 56px; background: #555351; text-align: center; margin-right: 14px; }
.rib-right { margin-left: auto; display: flex; align-items: center; gap: 9px; padding-right: 3px; }
.rib-right svg { width: 10px; height: 8px; }
.rib-right b { width: 16px; height: 16px; border-radius: 50%; background: #0a6cce; text-align: center; font-size: 12px; line-height: 15px; }
.navrow { height: 43px; background: #191919; display: flex; padding-top: 6px; align-items: flex-start; }
.navrow > svg { fill: none; stroke: #fff; stroke-width: 2; height: 14px; margin-top: 8px; }
.back { width: 14px; margin-left: 12px; }
.navrow .fwd { width: 14px; margin-left: 16px; stroke: #888; }
.navrow .rec { width: 8px; height: 8px; margin: 11px 0 0 12px; }
.upa { width: 12px; margin-left: 11px; }
.addr { width: 1265px; height: 30px; margin-left: 7px; border: 1px solid #535353; display: flex; align-items: center; padding-left: 4px; }
.addr i { width: 22px; text-align: center; color: #999; font-size: 17px; line-height: 14px; padding-bottom: 2px; }
.addr span { letter-spacing: -0.25px; }
.addr .c1 { width: 32px; }
.addr .c2 { width: 87px; }
.addr .c3 { width: 24px; }
.addr .c4 { width: 49px; }
.adrop { width: 10px; height: 8px; margin-left: auto; margin-top: 2px; }
.refresh { width: 12px; height: 14px; margin: 0 9px 0 19px; }
.exsearch { width: 525px; height: 30px; margin-left: 12px; border: 1px solid #535353; display: flex; align-items: center; padding-left: 14px; color: #7a7a7a; }
.exsearch svg { width: 14px; height: 14px; margin-right: 12px; }
.ex-body { flex: 1; display: flex; border-top: 3px solid #fff; min-height: 0; }
aside { width: 209px; background: #191919; border-right: 1px solid #2c2c2c; padding-top: 15px; }
.r { height: 24px; display: flex; align-items: center; padding-left: 32px; white-space: nowrap; }
.r > svg:first-child { width: 16px; height: 16px; margin-right: 5px; }
.r.l1 { padding-left: 24px; }
.r.l1 > svg:first-child { margin-right: 6px; }
.r.gap { margin-top: 8px; }
.r .pin { width: 12px; height: 12px; margin-left: auto; margin-right: 4px; }
.r.hl { background: linear-gradient(#333, #333) 1px 2px / 204px 22px no-repeat; letter-spacing: -0.1px; }
main { flex: 1; }
.head { height: 25px; display: flex; color: #d8d8d8; line-height: 23px; }
.head span { border-right: 1px solid #5a5a5a; padding-left: 6px; }
.head .n { width: 274px; padding-left: 19px; display: flex; }
.head .n svg { width: 9px; height: 5px; margin: 0 0 0 97px; }
.head .d { width: 143px; padding-left: 5px; }
.head .t { width: 121px; }
.head .s { width: 80px; padding-left: 5px; }
.file-row { width: 597px; height: 21px; margin-left: 16px; display: flex; align-items: center; padding-left: 3px; color: #dadada; }
.head + .file-row { margin-top: 6px; }
.file-row svg { width: 16px; height: 16px; margin-right: 4px; }
.file-row .n { width: 240px; color: #f2f2f2; }
.file-row .d { width: 144px; letter-spacing: -0.1px; }
.file-row .t { width: 130px; }
.file-row .s { flex: 1; text-align: right; padding-right: 4px; }
.file-row.picked { background: #777; box-shadow: inset 0 0 0 1px #616161; }
.ex-status { height: 23px; background: #333; display: flex; align-items: center; padding-left: 14px; color: #f0f0f0; }
.ex-status span { background: linear-gradient(#eee, #eee) right center / 1px 11px no-repeat; line-height: 15px; }
.e1 { width: 58px; }
.e2 { width: 139px; margin-left: 11px; letter-spacing: -0.15px; }
.modes { margin-left: auto; display: flex; align-items: center; margin-right: 8px; gap: 4px; }
.modes .mode { width: 22px; height: 23px; border: 1px solid #8a8a8a; background: #666; display: flex; align-items: center; justify-content: center; }
.mode svg { width: 17px; height: 14px; }
.modes .pic { width: 14px; height: 14px; }
```
